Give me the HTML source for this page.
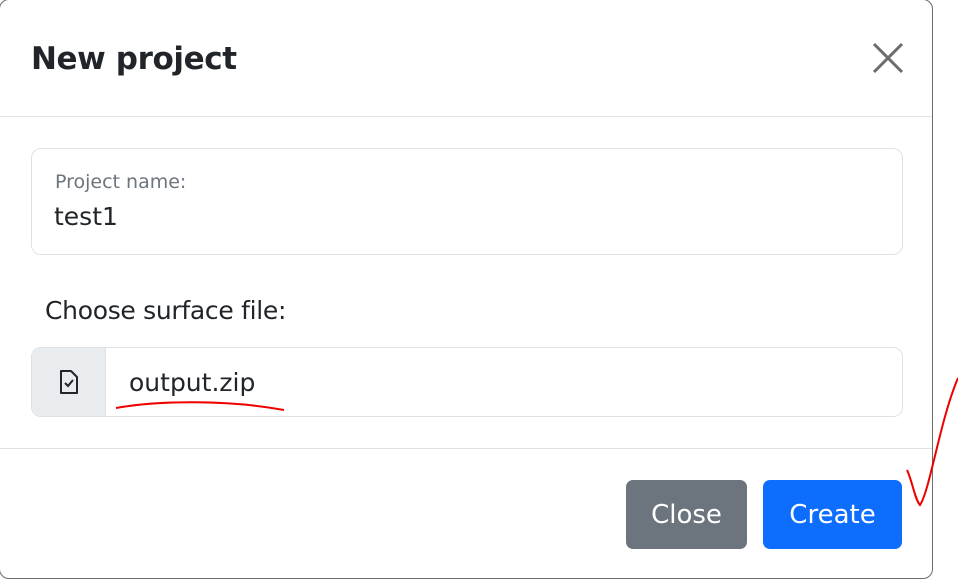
<!DOCTYPE html>
<html><head><style>
body{margin:0;width:958px;height:580px;background:#fff;position:relative;overflow:hidden;font-family:"DejaVu Sans","Liberation Sans",sans-serif;}
.modal{position:absolute;left:-1px;top:-1px;width:932px;height:578px;border:1px solid #6b6b6b;border-radius:10px;background:#fff;}
.a{position:absolute;}
</style></head><body>
<div class="modal"></div>
<div class="a" style="left:31px;top:41px;font-size:31px;font-weight:bold;color:#212529;letter-spacing:-0.4px">New project</div>
<svg class="a" style="left:872px;top:42px" width="32" height="32"><path d="M2 2L30 30M30 2L2 30" stroke="#6c6c6c" stroke-width="3"/></svg>
<div class="a" style="left:0;top:116px;width:932px;height:1px;background:#dee2e6"></div>
<div class="a" style="left:31px;top:148px;width:870px;height:105px;border:1px solid #dee2e6;border-radius:10px"></div>
<div class="a" style="left:55px;top:171px;font-size:19px;color:#6c757d">Project name:</div>
<div class="a" style="left:54px;top:202px;font-size:25px;color:#212529">test1</div>
<div class="a" style="left:45px;top:296px;font-size:25px;color:#212529;letter-spacing:-0.3px">Choose surface file:</div>
<div class="a" style="left:31px;top:347px;width:870px;height:68px;border:1px solid #dee2e6;border-radius:10px;overflow:hidden">
 <div style="position:absolute;left:0;top:0;width:73px;height:68px;background:#e9ecef;border-right:1px solid #dee2e6"></div>
</div>
<svg class="a" style="left:58px;top:369px" width="22" height="26"><path d="M3 2H13L19 8V24H3Z" fill="none" stroke="#212529" stroke-width="2" stroke-linejoin="round"/><path d="M7 14L10 17L15 11" fill="none" stroke="#212529" stroke-width="2"/></svg>
<div class="a" style="left:129px;top:368px;font-size:25px;color:#212529">output.zip</div>
<svg class="a" style="left:0;top:0" width="958" height="580"><path d="M116 408C160 400 230 400 284 410" fill="none" stroke="#e00" stroke-width="2"/><path d="M907 470C912 480 915 500 920 505C930 490 940 420 958 378" fill="none" stroke="#e00" stroke-width="2"/></svg>
<div class="a" style="left:0;top:448px;width:932px;height:1px;background:#dee2e6"></div>
<div class="a" style="left:626px;top:480px;width:121px;height:69px;background:#6c757d;border-radius:7px;color:#fff;font-size:26px;line-height:71px;text-align:center">Close</div>
<div class="a" style="left:763px;top:480px;width:139px;height:69px;background:#0d6efd;border-radius:7px;color:#fff;font-size:26px;line-height:71px;text-align:center">Create</div>
</body></html>
